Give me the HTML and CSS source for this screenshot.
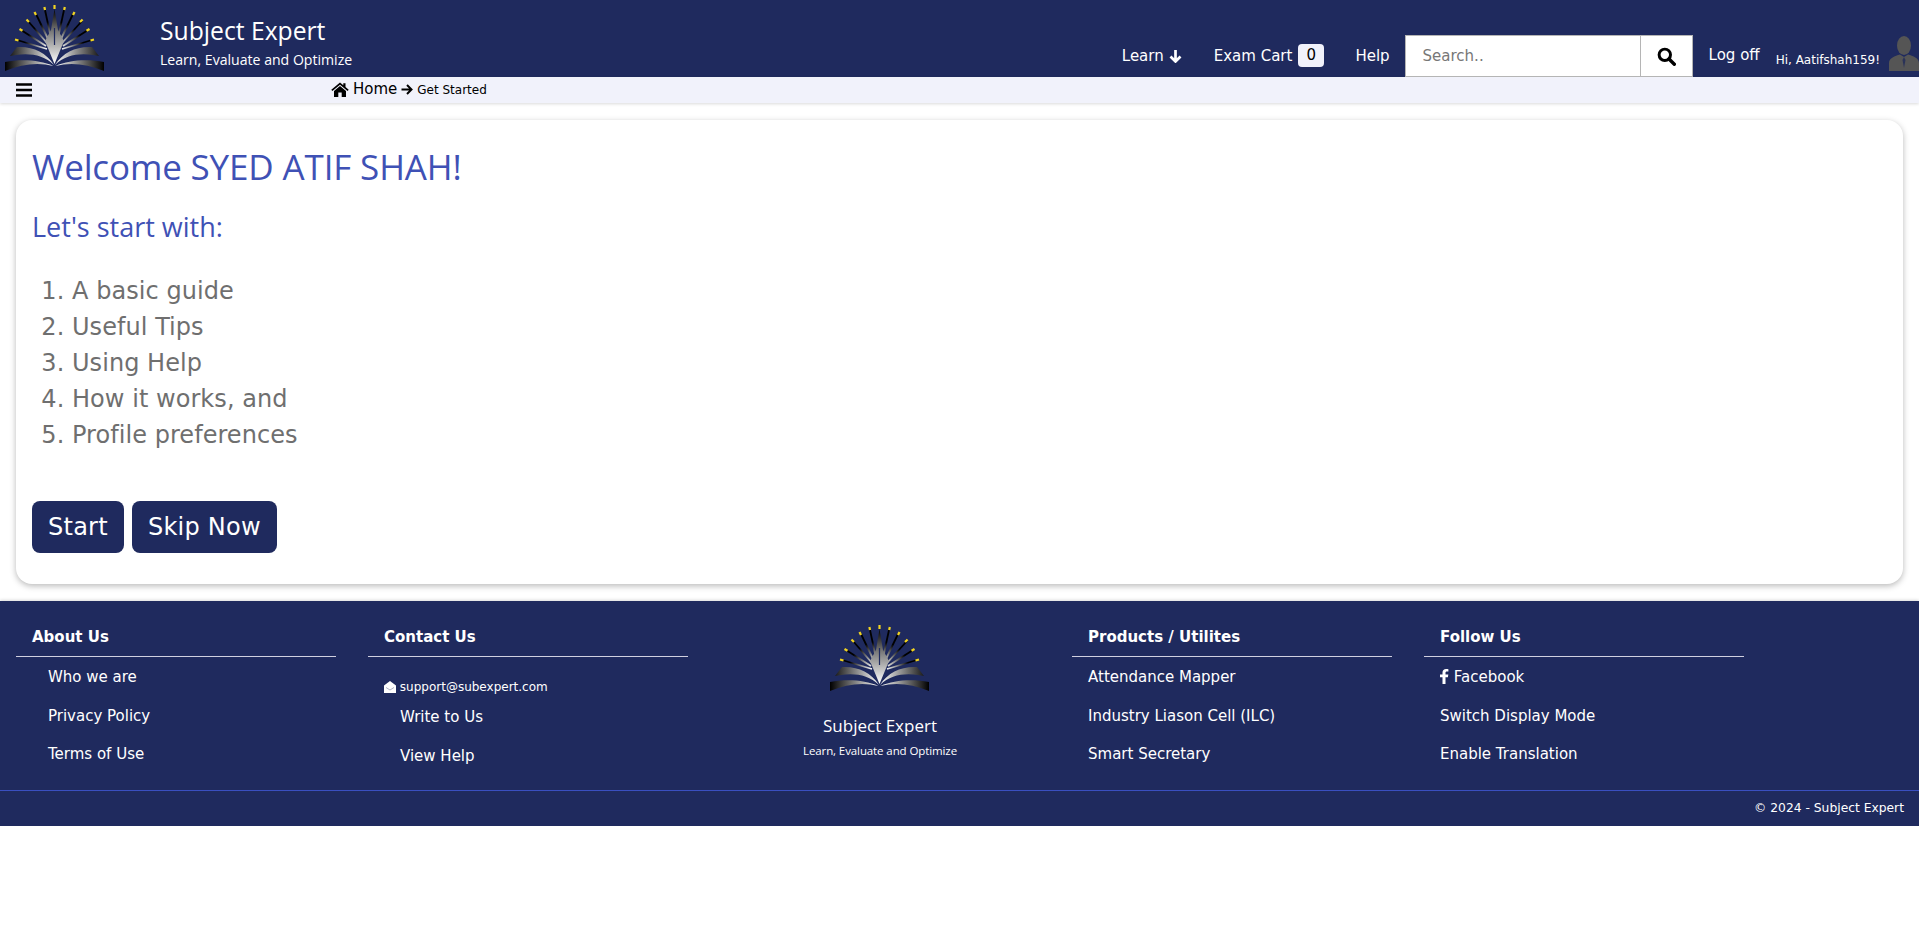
FILE: index.html
```html
<!DOCTYPE html>
<html lang="en">
<head>
<meta charset="utf-8">
<title>Subject Expert</title>
<link rel="stylesheet" href="styles.css">
</head>
<body>
<svg class="defs" width="0" height="0" aria-hidden="true">
  <defs>
    <radialGradient id="rayGrad" gradientUnits="userSpaceOnUse" cx="54" cy="52" r="36">
      <stop offset="0.2" stop-color="#ffffff"/>
      <stop offset="0.5" stop-color="#9a9a9a"/>
      <stop offset="0.85" stop-color="#000000"/>
    </radialGradient>
    <linearGradient id="wingGrad" gradientUnits="userSpaceOnUse" x1="5" y1="0" x2="104" y2="0">
      <stop offset="0" stop-color="#000000"/>
      <stop offset="0.28" stop-color="#8f8f8f"/>
      <stop offset="0.5" stop-color="#ffffff"/>
      <stop offset="0.72" stop-color="#8f8f8f"/>
      <stop offset="1" stop-color="#000000"/>
    </linearGradient>
    <linearGradient id="featherGrad" x1="0" y1="0" x2="0" y2="1">
      <stop offset="0" stop-color="#000000"/>
      <stop offset="0.4" stop-color="#777777"/>
      <stop offset="1" stop-color="#ffffff"/>
    </linearGradient>
    <symbol id="logo" viewBox="0 0 110 75">
      <g fill="none" stroke="url(#rayGrad)" stroke-width="1.800">
        <path d="M17 40 47 49"/>
        <path d="M21 30 46 46"/>
        <path d="M28 21 47 43"/>
        <path d="M36 14 49 41"/>
        <path d="M45 10 51 38"/>
        <path d="M64 10 58 38"/>
        <path d="M73 14 60 41"/>
        <path d="M82 21 62 43"/>
        <path d="M88 30 63 46"/>
        <path d="M92 40 62 49"/>
      </g>
      <g fill="none" stroke="#f2d422" stroke-width="2.200">
        <path d="M15 39.500 18.500 40.500"/>
        <path d="M19.500 29 22.500 30.800"/>
        <path d="M26.500 19.500 29 22"/>
        <path d="M34.500 12 36 15"/>
        <path d="M44.400 7 45 10"/>
        <path d="M54.500 5 54.500 9"/>
        <path d="M64.800 7 64.200 10"/>
        <path d="M74.500 12 73 15"/>
        <path d="M82.600 19.500 80 22"/>
        <path d="M89.500 29 86.500 30.800"/>
        <path d="M94 39.500 90.500 40.500"/>
      </g>
      <path d="M54.500 9 51 30 45 41 54.500 64 64 41 58 30Z" fill="url(#featherGrad)"/>
      <path d="M54.500 28V45" stroke="#1f2a5e" stroke-width="1.200"/>
      <path d="M54 65C46 52 32 46 17 47L10 56 16 55C30 53 44 55 54 65Z" fill="url(#wingGrad)"/>
      <path d="M55 65C63 52 77 46 92 47L99 56 93 55C79 53 65 55 55 65Z" fill="url(#wingGrad)"/>
      <path d="M53.500 66C40 60 22 59 5 62V71C22 64 38 62 53.500 66Z" fill="url(#wingGrad)"/>
      <path d="M55.500 66C69 60 87 59 104 62V71C87 64 71 62 55.500 66Z" fill="url(#wingGrad)"/>
    </symbol>
  </defs>
</svg>

<header class="topbar">
  <svg class="logo" width="110" height="75" viewBox="0 0 110 75" role="img" aria-label="Subject Expert logo"><use href="#logo"/></svg>
  <div class="brand">
    <div class="brand-name">Subject Expert</div>
    <div class="brand-tag">Learn, Evaluate and Optimize</div>
  </div>
  <nav class="nav">
    <a class="nav-item nav-learn">Learn
      <svg class="icon-arrow" width="13" height="14" viewBox="0 0 13 14"><path d="M6.500 1V12M1.500 7.500l5 5 5-5" fill="none" stroke="#fff" stroke-width="2.700"/></svg>
    </a>
    <a class="nav-item nav-cart">Exam Cart <span class="badge">0</span></a>
    <a class="nav-item nav-help">Help</a>
    <form class="search">
      <input class="search-input" type="text" placeholder="Search..">
      <button class="search-btn" type="button" aria-label="Search">
        <svg width="19" height="19" viewBox="0 0 18 18"><circle cx="7.400" cy="7.400" r="5.400" fill="none" stroke="#000" stroke-width="2.800"/><path d="M11.400 11.400 16.400 16.400" stroke="#000" stroke-width="3.200" stroke-linecap="round"/></svg>
      </button>
    </form>
    <a class="nav-item nav-logoff">Log off</a>
    <span class="hi">Hi, Aatifshah159!</span>
    <svg class="avatar" width="31" height="35" viewBox="0 0 31 35" role="img" aria-label="User"><ellipse cx="16" cy="9.500" rx="7" ry="9.500" fill="#555"/><path d="M1 35V27C1 22 7 20 12 18.500L16 21 20 18.500C25 20 31 22 31 27V35Z" fill="#555"/><path d="M16 21 14.500 24 16 32 17.500 24Z" fill="#2b3358"/></svg>
  </nav>
</header>

<div class="subbar">
  <svg class="burger" width="16" height="14" viewBox="0 0 16 14"><path d="M0 1.500h16M0 7h16M0 12.500h16" stroke="#000" stroke-width="2.700"/></svg>
  <div class="crumbs">
    <svg class="home" width="18" height="15" viewBox="0 0 18 15"><path d="M9 0.500 0.300 7.800 1.400 9 9 2.700 16.600 9 17.700 7.800 14.500 5.100V1.200H12.300V3.300Z" fill="#000"/><path d="M9 4 3 9V15H7.300V10.500H10.700V15H15V9Z" fill="#000"/></svg>
    <span class="crumb-home">Home</span>
    <svg class="crumb-arrow" width="12" height="11" viewBox="0 0 12 11"><path d="M0.500 5.500H10.500M6 1l4.500 4.500-4.500 4.500" fill="none" stroke="#000" stroke-width="2"/></svg>
    <span class="crumb-page">Get Started</span>
  </div>
</div>

<main class="content">
  <section class="card">
    <h1 class="welcome">Welcome SYED ATIF SHAH!</h1>
    <h3 class="lead">Let's start with:</h3>
    <ol class="steps">
      <li>A basic guide</li>
      <li>Useful Tips</li>
      <li>Using Help</li>
      <li>How it works, and</li>
      <li>Profile preferences</li>
    </ol>
    <div class="actions">
      <button class="btn" type="button">Start</button>
      <button class="btn" type="button">Skip Now</button>
    </div>
  </section>
</main>

<footer class="footer">
  <div class="footer-cols">
    <div class="fcol">
      <h4 class="ftitle">About Us</h4>
      <ul class="flinks indented">
        <li>Who we are</li>
        <li>Privacy Policy</li>
        <li>Terms of Use</li>
      </ul>
    </div>
    <div class="fcol">
      <h4 class="ftitle">Contact Us</h4>
      <div class="fmail">
        <svg width="12" height="12" viewBox="0 0 12 12"><path d="M6 0 12 4.500V12H0V4.500Z" fill="#fff"/><path d="M2 6.500 6 9 10 6.500" fill="none" stroke="#9aa0b8" stroke-width="0.800"/></svg>
        support@subexpert.com
      </div>
      <ul class="flinks indented contact">
        <li>Write to Us</li>
        <li>View Help</li>
      </ul>
    </div>
    <div class="fcol fcenter">
      <svg class="logo" width="110" height="75" viewBox="0 0 110 75" role="img" aria-label="Subject Expert logo"><use href="#logo"/></svg>
      <div class="fbrand">Subject Expert</div>
      <div class="ftag">Learn, Evaluate and Optimize</div>
    </div>
    <div class="fcol">
      <h4 class="ftitle">Products / Utilites</h4>
      <ul class="flinks">
        <li>Attendance Mapper</li>
        <li>Industry Liason Cell (ILC)</li>
        <li>Smart Secretary</li>
      </ul>
    </div>
    <div class="fcol">
      <h4 class="ftitle">Follow Us</h4>
      <ul class="flinks">
        <li><svg class="fb" width="9" height="15" viewBox="0 0 9 15"><path d="M2.500 15V8.300H0V5.600H2.500V3.700C2.500 1.300 3.900 0 6.100 0 7 0 7.900 0.100 8.400 0.200V2.600H7C5.800 2.600 5.500 3.200 5.500 4V5.600H8.300L7.900 8.300H5.500V15Z" fill="#fff"/></svg> Facebook</li>
        <li>Switch Display Mode</li>
        <li>Enable Translation</li>
      </ul>
    </div>
  </div>
  <div class="copyright">© 2024 - Subject Expert</div>
</footer>
</body>
</html>
```

FILE: styles.css
```css
* { box-sizing: border-box; }
html, body { margin: 0; padding: 0; }
body {
  font-family: "DejaVu Sans", Verdana, sans-serif;
  font-size: 15px;
  color: #000;
  background: #fff;
}
.defs { display: block; height: 0; }
.logo { display: block; flex: none; }

.topbar {
  display: flex;
  align-items: flex-start;
  height: 77px;
  background: #1f2a5e;
  color: #fff;
}
.brand { margin-left: 50px; padding-top: 15px; font-family: "Open Sans", "Noto Sans", sans-serif; }
.brand-name { font-size: 24.700px; line-height: 32px; }
.brand-tag { font-size: 14.100px; line-height: 20px; margin-top: 3px; }

.nav {
  margin-left: auto;
  display: flex;
  align-items: center;
  height: 42px;
  margin-top: 35px;
  font-size: 15px;
}
.nav-item { display: flex; align-items: center; gap: 4px; white-space: nowrap; margin-top: -1px; }
.nav-learn { margin-right: 32px; gap: 5px; }
.nav-cart { margin-right: 31px; gap: 5px; }
.nav-help { margin-right: 15px; }
.nav-logoff { margin: -2px 16px 0; }
.badge {
  display: inline-block;
  min-width: 26px;
  height: 23px;
  line-height: 23px;
  text-align: center;
  background: #f1f2fb;
  color: #000;
  border-radius: 4px;
  margin-left: 1px;
}
.search { display: flex; height: 42px; }
.search-input {
  width: 236px;
  height: 42px;
  border: 1px solid #b5b5b5;
  background: #fff;
  padding: 0 17px;
  font: 15px "DejaVu Sans", sans-serif;
  border-radius: 0;
}
.search-input::placeholder { color: #777; }
.search-btn {
  width: 52px;
  height: 42px;
  border: 1px solid #b5b5b5;
  border-left: 0;
  background: #fff;
  padding: 0;
  display: flex;
  align-items: center;
  justify-content: center;
}
.hi { font-size: 12px; margin-top: 8px; white-space: nowrap; margin-right: 8px; }
.avatar { align-self: flex-start; margin-top: 1px; }

.subbar {
  display: flex;
  align-items: center;
  height: 26px;
  background: #f1f2fb;
  box-shadow: 0 1px 3px rgba(0, 0, 0, 0.15);
  padding: 0 0 2px 16px;
}
.burger { flex: none; margin-top: 2px; }
.crumbs { display: flex; align-items: center; margin-left: 299px; }
.home { margin-right: 4px; }
.crumb-home { font-size: 15px; }
.crumb-arrow { margin: 1px 4px 0 4px; }
.crumb-page { font-size: 12px; margin-top: 1px; }

.content { padding: 17px 16px; }
.card {
  background: #fff;
  border-radius: 16px;
  box-shadow: 0 2px 6px rgba(0, 0, 0, 0.28);
  height: 464px;
  padding: 16px;
}
.welcome {
  margin: 8px 0 0;
  font: 400 35px/46px "Open Sans", "Noto Sans", sans-serif;
  color: #3f51b5;
  letter-spacing: -0.150px;
}
.lead {
  margin: 19px 0 0;
  font: 400 27px/36px "Open Sans", "Noto Sans", sans-serif;
  color: #3f51b5;
}
.steps {
  margin: 28px 0 0;
  padding: 0 0 0 40px;
  font-size: 24px;
  line-height: 36px;
  color: #6f6f6f;
  letter-spacing: 0.050px;
}
.actions { display: flex; gap: 8px; margin-top: 48px; }
.btn {
  height: 52px;
  padding: 0 16px;
  background: #1f2a5e;
  color: #fff;
  border: 0;
  border-radius: 8px;
  font: 24px "DejaVu Sans", sans-serif;
  letter-spacing: 0.250px;
}

.footer {
  background: #1f2a5e;
  color: #fff;
  box-shadow: 0 -1px 3px rgba(0, 0, 0, 0.15);
}
.footer-cols {
  display: grid;
  grid-template-columns: repeat(5, 352px);
  height: 190px;
  border-bottom: 1px solid #3a4fc0;
  padding-top: 20px;
}
.fcol { padding: 0 16px; }
.ftitle {
  margin: 0;
  font-size: 15px;
  line-height: 30px;
  font-weight: 700;
  padding: 1px 16px 4px;
  border-bottom: 1px solid #d0d0e0;
}
.flinks { list-style: none; margin: 0; padding: 0 0 0 16px; font-size: 15px; }
.flinks li { line-height: 38.500px; }
.flinks li:first-child { margin-top: 1px; }
.flinks.indented { padding-left: 32px; }
.flinks.contact li:first-child { margin-top: 3px; }
.fb { vertical-align: -2px; }
.fmail { margin: 22px 0 0 16px; font-size: 12px; line-height: 16px; }
.fmail svg { vertical-align: -2px; }
.fcenter { text-align: center; padding: 0; margin-top: -1px; }
.fcenter .logo { margin: 0 auto; }
.fbrand { font: 17px/24px "Open Sans", "Noto Sans", sans-serif; margin-top: 19px; }
.ftag { font: 11.500px/18px "Open Sans", "Noto Sans", sans-serif; margin-top: 4px; letter-spacing: -0.100px; }
.copyright { height: 35px; line-height: 34px; text-align: right; padding-right: 15px; font-size: 12.300px; }
```
